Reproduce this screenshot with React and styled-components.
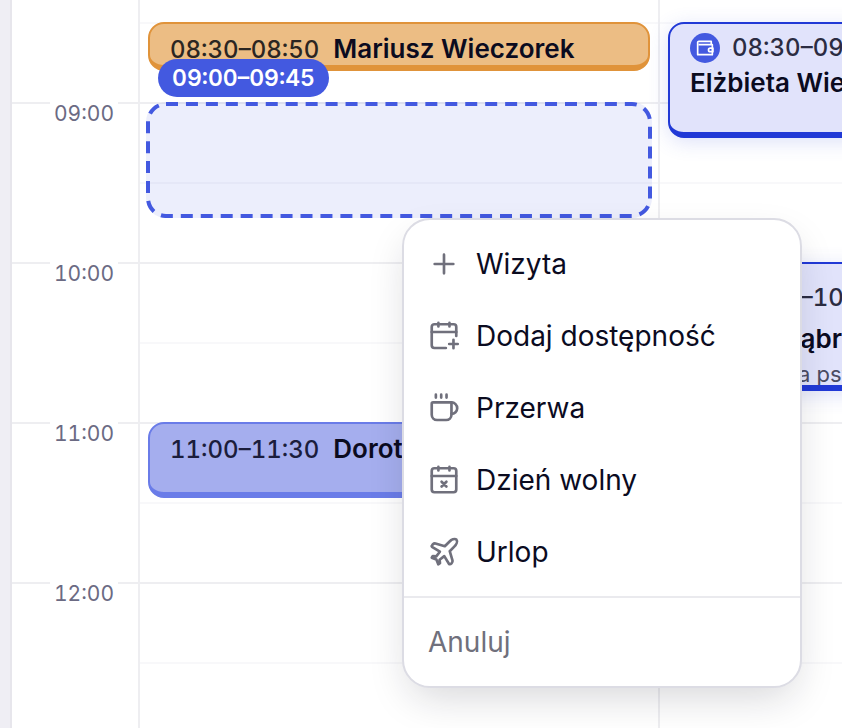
import React, { useState } from "react";
import styled, { createGlobalStyle } from "styled-components";

const GlobalStyles = createGlobalStyle`
  * {
    box-sizing: border-box;
  }
  body {
    margin: 0;
    background: #efeef4;
    font-family: Inter, "Liberation Sans", sans-serif;
    color: #0b0b1f;
  }
`;

const slots = ["", "09:00", "", "10:00", "", "11:00", "", "12:00", ""];

// rows are 5 minutes each, the first one starts at 08:30
const toRow = time => {
  const [h, m] = time.split(":").map(Number);
  return Math.round((h * 60 + m - 510) / 5) + 1;
};

const colors = {
  orange: { bg: "#ecbd84", border: "#e0933a", time: "#2b2622" },
  violet: { bg: "#a5aeee", border: "#6a7ce8", time: "#1b1d3c" },
  blue: { bg: "#e1e3fb", border: "#2139d6", time: "#2b2c42" }
};

const PlusIcon = () => (
  <Icon viewBox="0 0 24 24">
    <path d="M12 5v14M5 12h14" />
  </Icon>
);

const CalendarPlusIcon = () => (
  <Icon viewBox="0 0 24 24">
    <path d="M21.2 12V5.2a2 2 0 0 0-2-2H4.8a2 2 0 0 0-2 2v13.800a2 2 0 0 0 2 2h8.600" />
    <path d="M2.800 9h18.400M7.800 2.200v2.600M16.100 2.200v2.600M19.100 14.800v6.400M15.900 18h6.400" />
  </Icon>
);

const CupIcon = () => (
  <Icon viewBox="0 0 24 24">
    <path d="M17.600 7.800H3.800a1 1 0 0 0-1 1V17a4 4 0 0 0 4 4h6.800a4 4 0 0 0 4-4z" />
    <path d="M17.600 7.800a4.300 4.300 0 0 1 0 8.600M5.900 2v2.200M9.900 2v2.200M13.900 2v2.200" />
  </Icon>
);

const CalendarOffIcon = () => (
  <Icon viewBox="0 0 24 24">
    <rect x="2.8" y="3.2" width="18.4" height="18" rx="2" />
    <path d="M2.800 9h18.400M7.800 2.200v2.600M16.100 2.200v2.600M10.200 13.300l3.600 3.600M13.800 13.300l-3.600 3.600" />
  </Icon>
);

const PlaneIcon = () => (
  <Icon viewBox="0 0 24 24">
    <path d="M21.300 2.700C20 1.600 17.500 2.800 16 4.300l-3.400 3.400-7-2.100C4.200 5.300 2.300 7 3 8.200l5.900 3.600-2.700 3.500-2.600-.3-.8 1.300 3.500 1.400 1.400 3.500 1.300-.8-.3-2.600 3.500-2.700 3.600 5.900c1.200.7 2.900-1.200 2.600-2.600l-2.100-7L19.700 8c1.500-1.500 2.700-4 1.600-5.300z" />
  </Icon>
);

const WalletIcon = () => (
  <WalletSvg viewBox="0 0 24 24">
    <path d="M19.500 8V4H4.800a1.600 1.600 0 0 0-1.600 2v14h17.600V8H4.500" />
    <path d="M21.500 12.200h-3.200a2.100 2.100 0 0 0 0 4.200h3.200z" />
  </WalletSvg>
);

const options = [
  { label: "Wizyta", icon: PlusIcon },
  { label: "Dodaj dostępność", icon: CalendarPlusIcon },
  { label: "Przerwa", icon: CupIcon },
  { label: "Dzień wolny", icon: CalendarOffIcon },
  { label: "Urlop", icon: PlaneIcon }
];

function Visit({ start, end, name, note, color, paid, roomy }) {
  return (
    <Event $start={toRow(start)} $end={toRow(end)} $color={colors[color]} $stacked={paid} $roomy={roomy}>
      <TimeLine $roomy={roomy}>
        {paid && (
          <Paid>
            <WalletIcon />
          </Paid>
        )}
        <Time $color={colors[color].time}>
          {start}–{end}
        </Time>
      </TimeLine>
      <Name>{name}</Name>
      {note && <Note>{note}</Note>}
    </Event>
  );
}

export default function App() {
  const [open, setOpen] = useState(true);

  return (
    <Page>
      <GlobalStyles />
      <Calendar>
        <Hours>
          {slots.map((label, i) => (
            <HourSlot key={i} $hour={label !== ""}>
              {label && <HourLabel>{label}</HourLabel>}
            </HourSlot>
          ))}
        </Hours>
        <Day>
          <Visit start="08:30" end="08:50" name="Mariusz Wieczorek" color="orange" />
          <Selection $start={toRow("09:00")} $end={toRow("09:45")}>
            <Outline>
              <rect x="2" y="2" rx="18" />
            </Outline>
            <Range>09:00–09:45</Range>
          </Selection>
          <Visit start="11:00" end="11:30" name="Dorota Zielińska" color="violet" />
        </Day>
        <Day>
          <Visit start="08:30" end="09:15" name="Elżbieta Wieczorek" color="blue" paid />
          <Visit
            start="10:00"
            end="10:50"
            name="Kamila Dąbrowska"
            note="Konsultacja psychologiczna"
            color="blue"
            paid
            roomy
          />
        </Day>
      </Calendar>
      {open && (
        <Menu>
          <Group>
            {options.map(({ label, icon: OptionIcon }) => (
              <MenuButton key={label} onClick={() => setOpen(false)}>
                <OptionIcon />
                {label}
              </MenuButton>
            ))}
          </Group>
          <Group>
            <MenuButton $muted onClick={() => setOpen(false)}>
              Anuluj
            </MenuButton>
          </Group>
        </Menu>
      )}
    </Page>
  );
}

const Page = styled.div`
  position: relative;
  height: 100vh;
  overflow: hidden;
  padding-left: 10px;
`;

const Calendar = styled.main`
  display: grid;
  grid-template-columns: 126px 520px 520px;
  min-height: 100%;
  background: white;
  border-left: 2px solid #e7e6ec;
`;

const Hours = styled.div`
  padding-top: 22px;
`;

const HourSlot = styled.div`
  display: flex;
  justify-content: flex-end;
  height: 80px;
  padding-right: 20px;
  border-top: 2px solid ${props => (props.$hour ? "#eeeef1" : "transparent")};
`;

const HourLabel = styled.span`
  height: 26px;
  margin-top: -4px;
  padding: 0 4px;
  background: white;
  color: #6b6a83;
  font-size: 21px;
  line-height: 28px;
  font-variant-numeric: tabular-nums;
`;

const Day = styled.section`
  display: grid;
  grid-template-rows: repeat(54, 1fr);
  height: 742px;
  padding: 22px 8px 0;
  border-left: 2px solid #eeeef1;
  background: repeating-linear-gradient(
      #f8f8fa 0 2px,
      transparent 2px 80px,
      #eeeef1 80px 82px,
      transparent 82px 160px
    )
    0 22px no-repeat;
`;

const Event = styled.article`
  display: flex;
  flex-direction: ${props => (props.$stacked ? "column" : "row")};
  align-items: flex-start;
  gap: ${props => (props.$stacked ? "0" : "14px")};
  grid-row: ${props => props.$start} / ${props => props.$end};
  grid-column: 1;
  min-height: 0;
  margin-bottom: 4px;
  padding: ${props => (props.$roomy ? "16px" : props.$stacked ? "6px" : "8px")} 20px 0;
  overflow: hidden;
  white-space: nowrap;
  background: ${props => props.$color.bg};
  border: 2px solid ${props => props.$color.border};
  border-bottom-width: 6px;
  border-radius: 16px;
  box-shadow: ${props => (props.$stacked ? "0 4px 20px rgba(67, 89, 224, 0.18)" : "none")};
`;

const TimeLine = styled.div`
  display: flex;
  align-items: center;
  gap: 12px;
  margin-bottom: ${props => (props.$roomy ? "6px" : "0")};
`;

const Time = styled.span`
  color: ${props => props.$color};
  font-size: 24px;
  line-height: 36px;
  font-weight: 500;
  font-variant-numeric: tabular-nums;
`;

const Name = styled.span`
  font-size: 26px;
  line-height: 34px;
  font-weight: 600;
`;

const Note = styled.span`
  color: #4b4c63;
  font-size: 22px;
  line-height: 36px;
`;

const Paid = styled.span`
  display: grid;
  place-items: center;
  width: 30px;
  height: 30px;
  border-radius: 50%;
  background: #4359e0;
`;

const WalletSvg = styled.svg`
  width: 20px;
  height: 20px;
  fill: none;
  stroke: white;
  stroke-width: 2;
  stroke-linejoin: round;
`;

const Selection = styled.div`
  position: relative;
  grid-row: ${props => props.$start} / ${props => props.$end};
  grid-column: 1;
  margin: 0 -2px 4px;
  border-radius: 20px;
  background: rgba(67, 89, 224, 0.1);
`;

const Outline = styled.svg`
  display: block;
  width: 100%;
  height: 100%;

  rect {
    width: calc(100% - 4px);
    height: calc(100% - 4px);
    fill: none;
    stroke: #4359e0;
    stroke-width: 4;
    stroke-dasharray: 12 7.95;
  }
`;

const Range = styled.span`
  position: absolute;
  left: 12px;
  top: -43px;
  padding: 0 14px;
  border-radius: 19px;
  background: #4359e0;
  color: white;
  font-size: 23px;
  line-height: 38px;
  font-weight: 600;
  font-variant-numeric: tabular-nums;
`;

const Menu = styled.div`
  position: absolute;
  left: 402px;
  top: 218px;
  width: 400px;
  overflow: hidden;
  background: white;
  border: 2px solid #dcdce4;
  border-radius: 28px;
  box-shadow: 0 16px 40px -8px rgba(20, 20, 40, 0.18);
`;

const Group = styled.div`
  padding: 8px;

  & + & {
    border-top: 2px solid #eaeaee;
  }
`;

const MenuButton = styled.button`
  display: flex;
  align-items: center;
  gap: 16px;
  width: 100%;
  height: 72px;
  padding: 0 16px;
  border: 0;
  border-radius: 16px;
  background: none;
  color: ${props => (props.$muted ? "#70707c" : "#0b0b1f")};
  font-family: inherit;
  font-size: 28px;
  text-align: left;
  cursor: pointer;

  &:hover {
    background: #f4f4f8;
  }
`;

const Icon = styled.svg`
  width: 32px;
  height: 32px;
  fill: none;
  stroke: #70707c;
  stroke-width: 2;
  stroke-linecap: round;
  stroke-linejoin: round;
`;
